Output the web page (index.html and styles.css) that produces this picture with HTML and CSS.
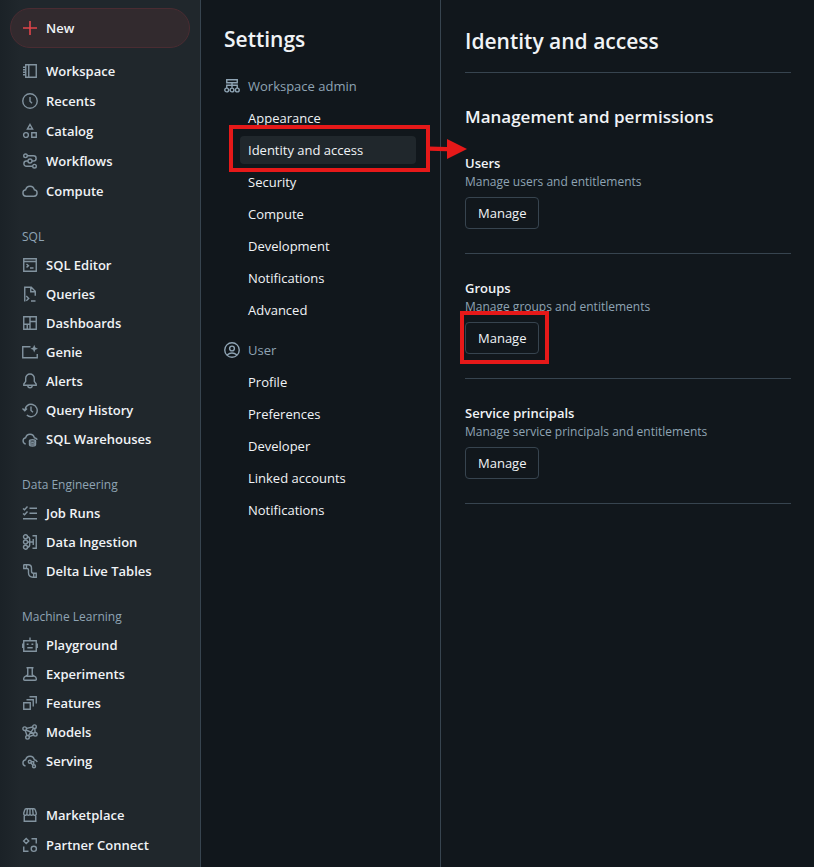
FILE: index.html
```html
<!DOCTYPE html>
<html lang="en">
<head>
<meta charset="utf-8">
<meta name="viewport" content="width=device-width, initial-scale=1">
<title>Settings - Identity and access</title>
<link rel="stylesheet" href="styles.css">
</head>
<body>
<div class="app">
  <nav class="sidebar" aria-label="Workspace">
    <button class="new-button" type="button">
      <svg class="icon" viewBox="0 0 16 16"><path d="M8 1v14M1 8h14"/></svg>New
    </button>
    <ul class="nav-list nav-list-roomy">
      <li><a href="#"><svg class="icon" viewBox="0 0 16 16"><path d="M3.750 1.750h10.500v12.500H3.750zM6.750 1.750v12.500M1 4.250h2.750M1 6.750h2.750M1 9.250h2.750M1 11.750h2.750"/></svg>Workspace</a></li>
      <li><a href="#"><svg class="icon" viewBox="0 0 16 16"><circle cx="8" cy="8" r="7.250"/><path d="M8 4v4.200l2 2"/></svg>Recents</a></li>
      <li><a href="#"><svg class="icon" viewBox="0 0 16 16"><path d="M8 1.500l2.600 4.500H5.400zM9.750 9.750h4.500v4.500H9.750z"/><circle cx="4" cy="12" r="2.400"/></svg>Catalog</a></li>
      <li><a href="#"><svg class="icon" viewBox="0 0 16 16"><circle cx="3.500" cy="2.800" r="1.800"/><circle cx="12.500" cy="13.200" r="1.800"/><circle cx="8" cy="8" r="2"/><path d="M5.300 2.750h6.200a2.600 2.600 0 0 1 0 5.250H10M6 8H4.500a2.500 2.500 0 0 0 0 5.250h6.200"/></svg>Workflows</a></li>
      <li><a href="#"><svg class="icon" viewBox="0 0 16 16"><path d="M4 13.250a3.300 3.300 0 0 1-.300-6.550 4.400 4.400 0 0 1 8.600 0 3.300 3.300 0 0 1-.300 6.550z"/></svg>Compute</a></li>
    </ul>

    <h2 class="nav-heading">SQL</h2>
    <ul class="nav-list">
      <li><a href="#"><svg class="icon" viewBox="0 0 16 16"><path d="M1.750 1.750h12.500v12.500H1.750zM1.750 4.500h12.500M4.500 7l2 1.700-2 1.700M8 11h3.500"/></svg>SQL Editor</a></li>
      <li><a href="#"><svg class="icon" viewBox="0 0 16 16"><path d="M2.750 15.500V1.250h6.500l4 4v4.500M8.750 1.500v4.250h4.250M4.300 10l2.400 2.400-2.400 2.400M9 15h4.500"/></svg>Queries</a></li>
      <li><a href="#"><svg class="icon" viewBox="0 0 16 16"><path d="M1.750 1.750h12.500v12.500H1.750zM8 1.750v12.500M1.750 9.250H8M8 6.500h6.250M5.250 9.250v5"/></svg>Dashboards</a></li>
      <li><a href="#"><svg class="icon" viewBox="0 0 16 16"><path d="M8.500 2.750H.75v11h14.500V10"/><path class="solid" d="M12.200.800l1.100 2.800 2.700 1.100-2.700 1.100-1.100 2.800-1.100-2.800-2.700-1.100 2.700-1.100z"/></svg>Genie</a></li>
      <li><a href="#"><svg class="icon" viewBox="0 0 16 16"><path d="M8 1a4.300 4.300 0 0 0-4.300 4.300v3L1.800 11v1.250h12.400V11l-1.900-2.700v-3A4.300 4.300 0 0 0 8 1zM5.800 12.500a2.200 2.200 0 0 0 4.400 0"/></svg>Alerts</a></li>
      <li><a href="#"><svg class="icon" viewBox="0 0 16 16"><path d="M2.800 8.500a6.200 6.200 0 1 1 2 4.600M.500 6.500l2.300 2.300L5 6.500M9 4.500v4l2 1.800"/></svg>Query History</a></li>
      <li><a href="#"><svg class="icon" viewBox="0 0 16 16"><path d="M3.700 13a3.200 3.200 0 0 1 0-6.300 4.400 4.400 0 0 1 8.600 0q2 .300 3 2"/><ellipse cx="10.500" cy="10" rx="3" ry="1.200"/><path d="M7.500 10v3.700c0 1.700 6 1.700 6 0V10M7.500 12c0 1.500 6 1.500 6 0"/></svg>SQL Warehouses</a></li>
    </ul>

    <h2 class="nav-heading">Data Engineering</h2>
    <ul class="nav-list">
      <li><a href="#"><svg class="icon" viewBox="0 0 16 16"><path d="M7.500 3.250H15M7.500 8.250H15M1 13.750h14M1 3.500l1.500 1.300L5.500 1.500M1 8.500l1.500 1.300L5.500 6.500"/></svg>Job Runs</a></li>
      <li><a href="#"><svg class="icon" viewBox="0 0 16 16"><circle cx="3.500" cy="2.800" r="2"/><circle cx="3.500" cy="8" r="2"/><circle cx="3.500" cy="13.200" r="2"/><path d="M5.500 2.800q2.200.200 2.200 2.500v5.400q0 2.300-2.200 2.500M5.500 8h5.700M10.500 1.750h3.750v12.500H10.500M11.250 5v6"/></svg>Data Ingestion</a></li>
      <li><a href="#"><svg class="icon" viewBox="0 0 16 16"><path d="M1.500 1.750h4.700q3.300 0 3.300 3.500v3q0 2 2 2h2.750v4H11q-4.500 0-4.500-4.500V7q0-1.500-1.500-1.500H1.750V1.750M4.500 1.750v3.700M11.700 10.300v4"/></svg>Delta Live Tables</a></li>
    </ul>

    <h2 class="nav-heading">Machine Learning</h2>
    <ul class="nav-list">
      <li><a href="#"><svg class="icon" viewBox="0 0 16 16"><path d="M1.750 3.750h12.500v10.500H1.750zM8 .500v3M.750 6.500v4.500M15.250 6.500v4.500M4.700 7.250h1.800M9.500 7.250h1.800M5.300 10.750h5.400"/></svg>Playground</a></li>
      <li><a href="#"><svg class="icon" viewBox="0 0 16 16"><path d="M4.500 1.750h7M5.750 1.750v7L2.200 11.300q-1.400 2.950.8 2.950h10q2.200 0 .8-2.950L10.250 8.750v-7M4.500 10.250h7"/></svg>Experiments</a></li>
      <li><a href="#"><svg class="icon" viewBox="0 0 16 16"><path d="M1.750 7.750h6.500v6.500h-6.500zM4.500 4.750h6.750v6.750M7.500 1.750h6.750V8.500"/></svg>Features</a></li>
      <li><a href="#"><svg class="icon" viewBox="0 0 16 16"><circle cx="2.700" cy="4.700" r="1.800"/><circle cx="12.500" cy="2.700" r="1.800"/><circle cx="13.300" cy="10.300" r="1.800"/><circle cx="5.500" cy="13.300" r="1.800"/><path d="M4.500 4.400l6.200-1.400M12.800 4.500l.300 4M3.300 6.500l1.600 5M7.200 12.600l4.400-1.600M4 6l7.800 3.400M11.500 4.300l-5 7.300"/></svg>Models</a></li>
      <li><a href="#"><svg class="icon" viewBox="0 0 16 16"><path d="M3.500 13A3.200 3.200 0 0 1 3.700 6.700a4.400 4.400 0 0 1 8.600 0q2 .300 3 2.300"/><circle cx="7.800" cy="8.700" r="1.500"/><circle cx="12" cy="13.200" r="1.500"/><path d="M8.800 9.800l2.200 2.400M9.300 8.700h2.400v2.500"/></svg>Serving</a></li>
    </ul>

    <ul class="nav-list nav-list-roomy nav-list-footer">
      <li><a href="#"><svg class="icon" viewBox="0 0 16 16"><path d="M4.200 1.750h7.600q1.200 0 1.500 1.200l1 3.300a1.600 1.600 0 0 1-3.200.800 1.600 1.600 0 0 1-3.100 0 1.600 1.600 0 0 1-3.100 0 1.600 1.600 0 0 1-3.200-.800l1-3.300q.300-1.200 1.500-1.200zM2.250 8.500v5.750h11.500V8.500M4.900 7l.500-5M8 7V2M11.100 7l-.500-5"/></svg>Marketplace</a></li>
      <li><a href="#"><svg class="icon" viewBox="0 0 16 16"><path d="M4.200 1.400L6.800 4 4.200 6.600 1.600 4zM9.500 1.750h4.750V6.500M1.750 9.500v4.750H6.500"/><circle cx="11.800" cy="11.800" r="2.600"/></svg>Partner Connect</a></li>
    </ul>
  </nav>

  <aside class="settings">
    <h1 class="settings-title">Settings</h1>
    <h2 class="settings-group"><svg class="icon" viewBox="0 0 16 16"><path d="M2.750 1.750h10.500v3H2.750zM8 4.750v5M2.750 10V7.250h10.500V10"/><circle cx="2.700" cy="12" r="1.900"/><circle cx="8" cy="12" r="1.900"/><circle cx="13.300" cy="12" r="1.900"/></svg>Workspace admin</h2>
    <ul class="settings-list">
      <li><a href="#">Appearance</a></li>
      <li><a class="selected" href="#" aria-current="page">Identity and access
        <span class="callout callout-item"></span>
        <svg class="callout-arrow" viewBox="0 0 38 20"><path d="M0 7.500l18 .500V0l20 10-20 10V12.200L0 11.700z"/></svg></a></li>
      <li><a href="#">Security</a></li>
      <li><a href="#">Compute</a></li>
      <li><a href="#">Development</a></li>
      <li><a href="#">Notifications</a></li>
      <li><a href="#">Advanced</a></li>
    </ul>
    <h2 class="settings-group"><svg class="icon" viewBox="0 0 16 16"><circle cx="8" cy="8" r="7.250"/><circle cx="8" cy="6.500" r="2.400"/><path d="M3 13q5-4 10 0"/></svg>User</h2>
    <ul class="settings-list">
      <li><a href="#">Profile</a></li>
      <li><a href="#">Preferences</a></li>
      <li><a href="#">Developer</a></li>
      <li><a href="#">Linked accounts</a></li>
      <li><a href="#">Notifications</a></li>
    </ul>
  </aside>

  <main class="content">
    <h1 class="content-title">Identity and access</h1>
    <h2 class="content-subtitle">Management and permissions</h2>
    <section class="entry">
      <h3>Users</h3>
      <p>Manage users and entitlements</p>
      <button class="manage" type="button">Manage</button>
    </section>
    <section class="entry">
      <h3>Groups</h3>
      <p>Manage groups and entitlements</p>
      <button class="manage" type="button">Manage<span class="callout callout-button"></span></button>
    </section>
    <section class="entry">
      <h3>Service principals</h3>
      <p>Manage service principals and entitlements</p>
      <button class="manage" type="button">Manage</button>
    </section>
  </main>
</div>
</body>
</html>
```
FILE: styles.css
```css
:root {
  --bg: #11171c;
  --panel: #20272c;
  --line: #37444f;
  --text: #f0f3f6;
  --muted: #8fa4b4;
  --icon: #82939f;
  --mark: #e61919;
}

* {
  box-sizing: border-box;
}

body {
  margin: 0;
  background: var(--bg);
  color: var(--text);
  font: 13px/20px "Segoe UI", "Open Sans", "Noto Sans", sans-serif;
}

h1, h2, h3, p, ul {
  margin: 0;
  padding: 0;
  font-size: inherit;
  font-weight: inherit;
}

ul {
  list-style: none;
}

a {
  color: inherit;
  text-decoration: none;
}

button {
  color: inherit;
  font: inherit;
  cursor: pointer;
}

.app {
  display: grid;
  grid-template-columns: 201px 240px minmax(0, 1fr);
  min-height: 100vh;
}

.icon {
  flex: none;
  width: 16px;
  height: 16px;
  fill: none;
  stroke: currentColor;
  stroke-width: 1.4;
}

.icon .solid {
  fill: currentColor;
  stroke: none;
}

/* Sidebar */

.sidebar {
  padding: 8px 10px 6px;
  border-right: 1px solid var(--line);
  background: linear-gradient(90deg, #1b2227, var(--panel) 20px);
}

.new-button {
  display: flex;
  align-items: center;
  gap: 8px;
  width: 100%;
  height: 40px;
  padding: 0 11px;
  border: 1px solid #4a2c32;
  border-radius: 20px;
  background: #322a2e;
  font-weight: 600;
}

.new-button .icon {
  color: #e0444a;
  stroke-width: 1.6;
}

.nav-list a {
  display: flex;
  align-items: center;
  gap: 8px;
  height: 29px;
  padding: 0 12px 1px;
  font-weight: 600;
  white-space: nowrap;
}

.nav-list-roomy {
  margin-top: 8px;
}

.nav-list-roomy a {
  height: 30px;
  padding-bottom: 0;
}

.nav-list-footer {
  margin-top: 24px;
}

.nav-list .icon {
  color: var(--icon);
}

.nav-heading {
  margin: 21px 0 4px;
  padding: 0 12px;
  color: var(--muted);
  font-size: 12px;
}

/* Settings menu */

.settings {
  padding: 23px 24px 24px 23px;
  border-right: 1px solid var(--line);
}

.settings-title {
  margin-bottom: 15px;
  font-size: 21px;
  font-weight: 600;
  line-height: 32px;
}

.settings-group {
  display: flex;
  align-items: center;
  gap: 8px;
  height: 32px;
  color: var(--muted);
}

.settings-list {
  display: grid;
  gap: 4px;
  padding: 2px 0 10px 16px;
}

.settings-list a {
  display: block;
  position: relative;
  padding: 4px 8px;
  border-radius: 4px;
}

.settings-list .selected {
  background: var(--panel);
}

/* Content */

.content {
  padding: 25px 23px 24px 24px;
}

.content-title {
  padding-bottom: 15px;
  border-bottom: 1px solid var(--line);
  font-size: 21px;
  font-weight: 600;
  line-height: 32px;
}

.content-subtitle {
  margin-top: 32px;
  font-size: 17px;
  font-weight: 600;
  line-height: 24px;
}

.entry {
  padding: 24px 0;
  border-bottom: 1px solid var(--line);
}

.entry h3 {
  font-weight: 600;
}

.entry p {
  margin-bottom: 6px;
  color: var(--muted);
  font-size: 12px;
  line-height: 18px;
}

.manage {
  position: relative;
  display: block;
  height: 32px;
  padding: 0 12px;
  border: 1px solid var(--line);
  border-radius: 4px;
  background: transparent;
}

/* Red marks over the controls */

.callout {
  position: absolute;
  border: 4px solid var(--mark);
  pointer-events: none;
}

.callout-item {
  inset: -11px -14px -8px -11px;
}

.callout-arrow {
  position: absolute;
  left: calc(100% + 13px);
  top: 3px;
  width: 38px;
  height: 20px;
  fill: var(--mark);
}

.callout-button {
  inset: -12px -11px -11px -6px;
}
```
